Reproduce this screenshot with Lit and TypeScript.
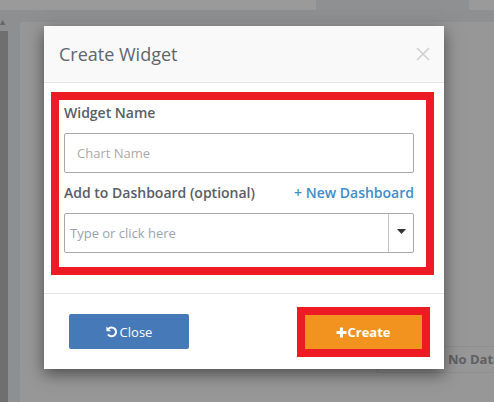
import { LitElement, html, css } from "lit";
import { customElement } from "lit/decorators.js";

@customElement("app-root")
export class AppRoot extends LitElement {
  static styles = css`
    :host { display: block; width: 494px; height: 402px; overflow: hidden; position: relative; background: #8e8f91; font-family: "Open Sans", sans-serif; color: #555a60; }
    * { box-sizing: border-box; }
    .bg-top { position: absolute; left: 0; top: 0; width: 494px; height: 10px; background: #9a9a9a; }
    .bg-tab { position: absolute; left: 316px; top: 0; width: 153px; height: 10px; background: #8f9092; }
    .bg-left { position: absolute; left: 0; top: 31px; width: 8px; height: 371px; background: #6f6f6f; }
    .bg-arrow { position: absolute; left: 0; top: 20px; }
    .bg-panel { position: absolute; left: 20px; top: 22px; width: 474px; height: 380px; background: #979797; border-radius: 3px 0 0 0; }
    .nodata { position: absolute; left: 376px; top: 346px; width: 118px; height: 27px; border: 1px solid #8f8f8f; border-right: 0; border-radius: 3px 0 0 3px; padding-left: 71px; font-size: 13px; font-weight: 700; line-height: 25px; color: #5f6062; white-space: nowrap; overflow: hidden; }
    .modal { position: absolute; left: 44px; top: 26px; width: 400px; height: 343px; background: #fff; box-shadow: 0 5px 15px rgba(0,0,0,.5); display: flex; flex-direction: column; }
    .head { height: 57px; background: #f9f9f9; border-bottom: 1px solid #e5e5e5; display: flex; align-items: center; justify-content: space-between; padding: 0 14px 0 15px; flex: none; }
    .title { font-size: 18px; color: #5f666d; }
    .x { display: block; }
    .body { flex: none; margin: 9px 10px 0 7px; height: 183px; border: 8px solid #ed1c24; padding: 0 12px 0 5px; display: flex; flex-direction: column; }
    .label { font-size: 14px; font-weight: 600; line-height: 20px; color: #585d63; }
    .l1 { margin-top: 3px; }
    .input { margin-top: 10px; height: 40px; border: 1px solid #a9a9a9; border-radius: 2px; font-size: 13px; line-height: 38px; padding-left: 12px; color: #a9a9a9; }
    .row { margin-top: 10px; display: flex; justify-content: space-between; }
    .link { font-size: 14px; font-weight: 600; line-height: 20px; color: #428bca; }
    .select { margin-top: 10px; height: 40px; border: 1px solid #a9a9a9; border-radius: 2px; display: flex; }
    .select .ph { flex: 1; font-size: 13px; line-height: 38px; padding-left: 5px; color: #99a3b2; }
    .select .caret { width: 25px; border-left: 1px solid #c4c4c4; display: flex; align-items: center; justify-content: center; padding-bottom: 4px; }
    .foot { margin-top: 18px; border-top: 1px solid #e5e5e5; flex: 1; display: flex; justify-content: space-between; align-items: flex-start; padding: 13px 14px 0 25px; }
    .close { margin-top: 7px; width: 120px; height: 35px; background: #4679b8; border-radius: 2px; color: #fff; font-size: 13px; display: flex; align-items: center; justify-content: center; gap: 2px; }
    .create-wrap { border: 8px solid #ed1c24; }
    .create { width: 117px; height: 34px; background: #f3931f; color: #fff; font-size: 13px; font-weight: 700; display: flex; align-items: center; justify-content: center; }
    .plus { display: block; }
  `;
  render() {
    return html`
      <div class="bg-top"></div><div class="bg-tab"></div>
      <div class="bg-left"></div><div class="bg-panel"></div>
      <svg class="bg-arrow" width="6" height="5" viewBox="0 0 6 5"><path d="M0 5L2.5 0L5.5 5Z" fill="#666"/></svg>
      <div class="nodata">No Data</div>
      <div class="modal">
        <div class="head">
          <span class="title">Create Widget</span>
          <svg class="x" width="14" height="14" viewBox="0 0 14 14"><path d="M1 1L13 13M13 1L1 13" stroke="#cfcfcf" stroke-width="1.6" fill="none"/></svg>
        </div>
        <div class="body">
          <div class="label l1">Widget Name</div>
          <div class="input">Chart Name</div>
          <div class="row"><span class="label">Add to Dashboard (optional)</span><span class="link">+ New Dashboard</span></div>
          <div class="select"><span class="ph">Type or click here</span><span class="caret"><svg width="9" height="5" viewBox="0 0 9 5"><path d="M0 0H9L4.5 5Z" fill="#333"/></svg></span></div>
        </div>
        <div class="foot">
          <div class="close"><svg width="12" height="12" viewBox="0 0 12 12"><path d="M2.2 3.2A4.4 4.4 0 1 1 2 8.4" stroke="#fff" stroke-width="2" fill="none"/><path d="M.4 .6V5.2H5Z" fill="#fff"/></svg><span>Close</span></div>
          <div class="create-wrap"><div class="create"><svg class="plus" width="11" height="11" viewBox="0 0 11 11"><path d="M5.5 .5V10.5M.5 5.5H10.5" stroke="#fff" stroke-width="3" fill="none"/></svg><span>Create</span></div></div>
        </div>
      </div>`;
  }
}
